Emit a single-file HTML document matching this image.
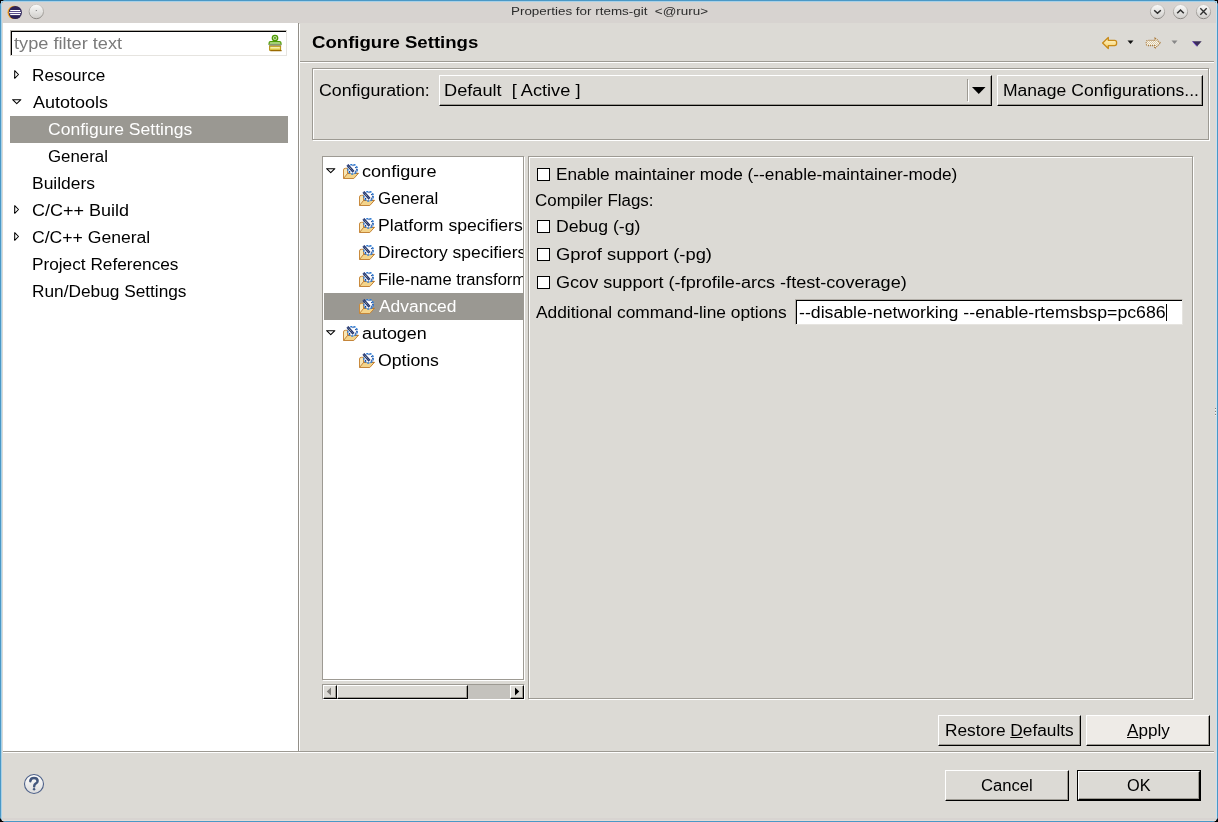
<!DOCTYPE html>
<html><head><meta charset="utf-8">
<style>
*{margin:0;padding:0;box-sizing:border-box}
html{background:#000}html,body{width:1218px;height:822px;overflow:hidden}body{background:#000}
body{position:relative;font-family:"Liberation Sans",sans-serif;font-size:16px;letter-spacing:0.6px;color:#000}
.a{position:absolute}
.t{position:absolute;line-height:20px;white-space:nowrap;will-change:transform}
.sel{position:absolute;background:#9a9892}
.cb{position:absolute;width:13px;height:13px;border:1px solid #000;background:#fff}
.btn{position:absolute;background:#dcdad5;border-top:1px solid #fff;border-left:1px solid #fff;border-right:1px solid #000;border-bottom:1px solid #000;box-shadow:inset -1px -1px 0 #9d9a93}
.etch{position:absolute;border:1px solid #9d9a93;box-shadow:1px 1px 0 #fff, inset 1px 1px 0 #fff}
</style></head><body>
<svg width="0" height="0" style="position:absolute">
<defs>
<linearGradient id="rb" x1="0" y1="0" x2="0" y2="1"><stop offset="0" stop-color="#fbfbfa"/><stop offset="1" stop-color="#cfcdca"/></linearGradient>
<linearGradient id="rs" x1="0" y1="0" x2="0" y2="1"><stop offset="0" stop-color="#cfccc8"/><stop offset="1" stop-color="#8a8783"/></linearGradient>
<linearGradient id="hb" x1="0" y1="0" x2="0" y2="1"><stop offset="0" stop-color="#ffffff"/><stop offset="1" stop-color="#dcdcdc"/></linearGradient>
<linearGradient id="ya" x1="0" y1="0" x2="0" y2="1"><stop offset="0" stop-color="#fff8d8"/><stop offset="1" stop-color="#f6cf63"/></linearGradient>
<pattern id="dith" width="2" height="2" patternUnits="userSpaceOnUse"><rect width="2" height="2" fill="#fbf6ea"/><rect width="1" height="1" fill="#d9c9a8"/><rect x="1" y="1" width="1" height="1" fill="#d9c9a8"/></pattern>
<g id="fg">
 <path d="M0.5 14.2 L0.5 6 Q0.5 4.3 2.3 4.3 L4.5 4.3 L4.5 14.2 Z" fill="#f8e6b4" stroke="#c98b3e" stroke-width="1"/>
 <path d="M4.6 9.4 L15.4 9.4 L10.8 14.5 L0.5 14.5 Z" fill="#f4d48a" stroke="#c4853a" stroke-width="1"/>
 <path d="M4.6 9.4 L15.4 9.4" stroke="#b8782e" stroke-width="1.1"/>
 <circle cx="9.6" cy="5.2" r="4.7" fill="#ffffff" stroke="#2f7bd2" stroke-width="1.5" stroke-dasharray="2.2 1"/>
 <circle cx="12.6" cy="3.6" r="0.7" fill="#1c3f8a"/><circle cx="6.6" cy="7.4" r="0.7" fill="#1c3f8a"/><circle cx="12.8" cy="7.2" r="0.7" fill="#1c3f8a"/><circle cx="10" cy="1.6" r="0.7" fill="#1c3f8a"/><circle cx="13.8" cy="5.4" r="0.6" fill="#1c3f8a"/>
 <path d="M4.4 0.9 L10.6 7.9" stroke="#1b2f72" stroke-width="2.6"/>
 <path d="M5 1.7 L10.1 7.3" stroke="#f4eaa0" stroke-width="0.9" stroke-dasharray="0.9 0.9"/>
</g>
</defs></svg>
<div class="a" style="left:0;top:0;width:1218px;height:822px;background:#dcdad5;border-radius:6px"></div>
<div class="a" style="left:2px;top:2px;width:1214px;height:21px;background:#d7d3d0"></div>
<div class="t" style="left:510.98px;top:1px;letter-spacing:0;transform:scaleX(1.2194);transform-origin:0 0;font-size:11px;color:#2b2b2b">Properties for rtems-git&nbsp; &lt;@ruru&gt;</div>
<svg class="a" style="left:0px;top:0px" width="50" height="24" viewBox="0 0 50 24">
<circle cx="14.2" cy="12.4" r="6.7" fill="#f5a21b"/>
<circle cx="15.3" cy="12.5" r="6.6" fill="#2b2257"/>
<rect x="10.2" y="10" width="10" height="1.1" fill="#fff"/><rect x="9.2" y="12" width="11.8" height="1.1" fill="#fff"/><rect x="10.2" y="14" width="10" height="1.1" fill="#fff"/>
<rect x="9.5" y="11.1" width="11" height="0.9" fill="#5d518f"/><rect x="9.5" y="13.1" width="11" height="0.9" fill="#5d518f"/>
</svg>
<svg class="a" style="left:28px;top:3px" width="17" height="17" viewBox="0 0 17 17">
<circle cx="8.3" cy="8.5" r="7.2" fill="url(#rb)" stroke="url(#rs)" stroke-width="1"/>
<rect x="7.8" y="7.3" width="1" height="1" fill="#444"/><rect x="7.8" y="8.3" width="1" height="1" fill="#fff"/>
</svg>
<svg class="a" style="left:1148.9px;top:3px" width="17" height="17" viewBox="0 0 17 17">
<circle cx="8.5" cy="8.6" r="7.1" fill="url(#rb)" stroke="url(#rs)" stroke-width="1"/>
<path d="M5.2 7.3 L8.5 10.3 L11.8 7.3" fill="none" stroke="#2e2e2e" stroke-width="1.55"/>
</svg>
<svg class="a" style="left:1172.1px;top:3px" width="17" height="17" viewBox="0 0 17 17">
<circle cx="8.5" cy="8.6" r="7.1" fill="url(#rb)" stroke="url(#rs)" stroke-width="1"/>
<path d="M5.2 10.3 L8.5 7.0 L11.8 10.3" fill="none" stroke="#2e2e2e" stroke-width="1.55"/>
</svg>
<svg class="a" style="left:1195.0px;top:3px" width="17" height="17" viewBox="0 0 17 17">
<circle cx="8.5" cy="8.6" r="7.1" fill="url(#rb)" stroke="url(#rs)" stroke-width="1"/>
<path d="M5.3 5.3 L11.7 11.7 M11.7 5.3 L5.3 11.7" fill="none" stroke="#2e2e2e" stroke-width="1.35"/>
</svg>
<div class="a" style="left:3px;top:23px;width:295px;height:728px;background:#fff"></div>
<div class="a" style="left:298px;top:23px;width:1px;height:728px;background:#928f88"></div>
<div class="a" style="left:299px;top:24px;width:1px;height:727px;background:#fff"></div>
<div class="a" style="left:10px;top:30px;width:277px;height:26px;border-top:1px solid #b3afa8;border-left:1px solid #b3afa8;border-right:1px solid #e6e4e0;border-bottom:1px solid #e6e4e0"></div>
<div class="a" style="left:11px;top:31px;width:275px;height:24px;border-top:1px solid #000;border-left:1px solid #000"></div>
<div class="t" style="left:13.60px;top:34px;letter-spacing:0;transform:scaleX(1.1358);transform-origin:0 0;color:#7a7a7a">type filter text</div>
<svg class="a" style="left:264px;top:32px" width="24" height="24" viewBox="0 0 24 24">
<rect x="9.3" y="8" width="3.4" height="2.5" fill="#b6dc80"/>
<circle cx="11" cy="6" r="2.7" fill="#c9e6a0" stroke="#4e9a06" stroke-width="1.3"/>
<circle cx="11" cy="6" r="0.9" fill="#3f8f10"/>
<path d="M6.5 9.6 L15.5 9.6 Q17 9.6 17 11 L17 12.3 L5.1 12.3 L5.1 11 Q5.1 9.6 6.5 9.6 Z" fill="#c2e39a" stroke="#4e9a06" stroke-width="1.2"/>
<rect x="5" y="12.3" width="12.2" height="1.9" fill="#9e9e9a"/>
<rect x="5.6" y="14.2" width="11" height="4" fill="#ecdc66" stroke="#b5900f" stroke-width="1"/>
<rect x="6.6" y="15" width="9" height="1.2" fill="#f4eeb0"/>
<path d="M6.3 18.6 L17.6 18.6" stroke="#9a6a00" stroke-width="1.3"/>
</svg>
<div class="sel" style="left:10px;top:116px;width:278px;height:27px"></div>
<div class="t" style="left:31.83px;top:66px;letter-spacing:0;transform:scaleX(1.0716);transform-origin:0 0;">Resource</div>
<div class="t" style="left:32.70px;top:93px;letter-spacing:0;transform:scaleX(1.1227);transform-origin:0 0;">Autotools</div>
<div class="t" style="left:47.90px;top:120px;letter-spacing:0;transform:scaleX(1.0954);transform-origin:0 0;color:#fff">Configure Settings</div>
<div class="t" style="left:47.95px;top:147px;letter-spacing:0;transform:scaleX(1.0527);transform-origin:0 0;">General</div>
<div class="t" style="left:32.11px;top:174px;letter-spacing:0;transform:scaleX(1.0911);transform-origin:0 0;">Builders</div>
<div class="t" style="left:32.08px;top:201px;letter-spacing:0;transform:scaleX(1.1238);transform-origin:0 0;">C/C++ Build</div>
<div class="t" style="left:32.10px;top:228px;letter-spacing:0;transform:scaleX(1.0991);transform-origin:0 0;">C/C++ General</div>
<div class="t" style="left:32.12px;top:255px;letter-spacing:0;transform:scaleX(1.0763);transform-origin:0 0;">Project References</div>
<div class="t" style="left:32.12px;top:282px;letter-spacing:0;transform:scaleX(1.0789);transform-origin:0 0;">Run/Debug Settings</div>
<svg class="a" style="left:13px;top:69px" width="8" height="11" viewBox="0 0 8 11"><path d="M1.7 1.7 L1.7 9.3 L5.5 5.5 Z" fill="#fff" stroke="#000" stroke-width="1.05" stroke-linejoin="round"/></svg>
<svg class="a" style="left:11px;top:98px" width="12" height="8" viewBox="0 0 12 8"><path d="M1.6 1.7 L9.9 1.7 L5.75 5.6 Z" fill="#fff" stroke="#000" stroke-width="1.05" stroke-linejoin="round"/></svg>
<svg class="a" style="left:13px;top:204px" width="8" height="11" viewBox="0 0 8 11"><path d="M1.7 1.7 L1.7 9.3 L5.5 5.5 Z" fill="#fff" stroke="#000" stroke-width="1.05" stroke-linejoin="round"/></svg>
<svg class="a" style="left:13px;top:231px" width="8" height="11" viewBox="0 0 8 11"><path d="M1.7 1.7 L1.7 9.3 L5.5 5.5 Z" fill="#fff" stroke="#000" stroke-width="1.05" stroke-linejoin="round"/></svg>
<div class="t" style="left:311.84px;top:33px;letter-spacing:0;transform:scaleX(1.162);transform-origin:0 0;font-weight:bold">Configure Settings</div>
<div class="a" style="left:300px;top:61px;width:914px;height:1px;background:#9d9a93"></div>
<div class="a" style="left:300px;top:62px;width:914px;height:1px;background:#fff"></div>
<svg class="a" style="left:1101px;top:36px" width="18" height="14" viewBox="0 0 18 14">
<path d="M1.6 7 L7.3 1.5 L7.3 4.4 L13.6 4.4 Q15.6 4.4 15.6 6.4 L15.6 7.6 Q15.6 9.6 13.6 9.6 L7.3 9.6 L7.3 12.5 Z" fill="url(#ya)" stroke="#c88a18" stroke-width="1.3" stroke-linejoin="round"/>
</svg>
<svg class="a" style="left:1127px;top:40px" width="7" height="5" viewBox="0 0 7 5"><path d="M0.5 0.5 L6.5 0.5 L3.5 4 Z" fill="#111"/></svg>
<svg class="a" style="left:1144px;top:36px" width="18" height="14" viewBox="0 0 18 14">
<path d="M16.4 7 L10.7 1.5 L10.7 4.4 L4.2 4.4 Q2.2 4.4 2.2 6.4 L2.2 7.6 Q2.2 9.6 4.2 9.6 L10.7 9.6 L10.7 12.5 Z" fill="url(#dith)" stroke="#a8783a" stroke-width="1.2" stroke-dasharray="1 1" stroke-linejoin="round"/>
</svg>
<svg class="a" style="left:1171px;top:40px" width="7" height="5" viewBox="0 0 7 5"><path d="M0.5 0.5 L6.5 0.5 L3.5 4 Z" fill="#888"/></svg>
<svg class="a" style="left:1192px;top:41px" width="10" height="6" viewBox="0 0 10 6"><path d="M0.3 0.3 L9.7 0.3 L5 5.5 Z" fill="#3b2e5a"/><path d="M0.5 0.5 L5 5.3" stroke="#6a3ad0" stroke-width="0.9"/></svg>
<div class="etch" style="left:312px;top:68px;width:897px;height:72px"></div>
<div class="t" style="left:319.09px;top:81px;letter-spacing:0;transform:scaleX(1.1113);transform-origin:0 0;">Configuration:</div>
<div class="btn" style="left:439px;top:75px;width:553px;height:31px"></div>
<div class="t" style="left:443.96px;top:81px;letter-spacing:0;transform:scaleX(1.1364);transform-origin:0 0;">Default&nbsp; [ Active ]</div>
<div class="a" style="left:967px;top:79px;width:1px;height:22px;background:#9d9a93"></div>
<div class="a" style="left:968px;top:80px;width:1px;height:22px;background:#fff"></div>
<svg class="a" style="left:971px;top:86px" width="16" height="9" viewBox="0 0 16 9"><path d="M1 1 L14.5 1 L7.75 8 Z" fill="#000"/></svg>
<div class="btn" style="left:997px;top:75px;width:206px;height:31px"></div>
<div class="t" style="left:1003.20px;top:81px;letter-spacing:0;transform:scaleX(1.096);transform-origin:0 0;">Manage Configurations...</div>
<div class="etch" style="left:322px;top:156px;width:202px;height:524px;background:#fff"></div>
<div class="a" style="left:323px;top:157px;width:200px;height:522px;overflow:hidden">
<div class="sel" style="left:1px;top:136px;width:199px;height:27px"></div>
<div class="t" style="left:38.97px;top:5px;letter-spacing:0;transform:scaleX(1.1312);transform-origin:0 0;">configure</div>
<svg class="a" width="16" height="16" viewBox="0 0 16 16" style="left:20px;top:7px"><use href="#fg"/></svg>
<svg class="a" style="left:2px;top:10px" width="12" height="8" viewBox="0 0 12 8"><path d="M1.6 1.7 L9.9 1.7 L5.75 5.6 Z" fill="#fff" stroke="#000" stroke-width="1.05" stroke-linejoin="round"/></svg>
<div class="t" style="left:54.94px;top:32px;letter-spacing:0;transform:scaleX(1.0582);transform-origin:0 0;">General</div>
<svg class="a" width="16" height="16" viewBox="0 0 16 16" style="left:36px;top:34px"><use href="#fg"/></svg>
<div class="t" style="left:55.40px;top:59px;letter-spacing:0;transform:scaleX(1.1);transform-origin:0 0;">Platform specifiers</div>
<svg class="a" width="16" height="16" viewBox="0 0 16 16" style="left:36px;top:61px"><use href="#fg"/></svg>
<div class="t" style="left:55.40px;top:86px;letter-spacing:0;transform:scaleX(1.09);transform-origin:0 0;">Directory specifiers</div>
<svg class="a" width="16" height="16" viewBox="0 0 16 16" style="left:36px;top:88px"><use href="#fg"/></svg>
<div class="t" style="left:55.40px;top:113px;letter-spacing:0;transform:scaleX(1.035);transform-origin:0 0;">File-name transforms</div>
<svg class="a" width="16" height="16" viewBox="0 0 16 16" style="left:36px;top:115px"><use href="#fg"/></svg>
<div class="t" style="left:56.00px;top:140px;letter-spacing:0;transform:scaleX(1.0886);transform-origin:0 0;color:#fff">Advanced</div>
<svg class="a" width="16" height="16" viewBox="0 0 16 16" style="left:36px;top:142px"><use href="#fg"/></svg>
<div class="t" style="left:38.98px;top:167px;letter-spacing:0;transform:scaleX(1.1196);transform-origin:0 0;">autogen</div>
<svg class="a" width="16" height="16" viewBox="0 0 16 16" style="left:20px;top:169px"><use href="#fg"/></svg>
<svg class="a" style="left:2px;top:172px" width="12" height="8" viewBox="0 0 12 8"><path d="M1.6 1.7 L9.9 1.7 L5.75 5.6 Z" fill="#fff" stroke="#000" stroke-width="1.05" stroke-linejoin="round"/></svg>
<div class="t" style="left:54.90px;top:194px;letter-spacing:0;transform:scaleX(1.1037);transform-origin:0 0;">Options</div>
<svg class="a" width="16" height="16" viewBox="0 0 16 16" style="left:36px;top:196px"><use href="#fg"/></svg>
</div>
<div class="a" style="left:322px;top:684px;width:203px;height:16px;background:#c4c2bd;border-left:1px solid #9d9a93;border-top:1px solid #9d9a93;border-right:1px solid #fff;border-bottom:1px solid #fff"></div>
<div class="btn" style="left:323px;top:685px;width:14px;height:14px"></div>
<svg class="a" style="left:326px;top:687px" width="6" height="9" viewBox="0 0 6 9"><path d="M5 0.5 L5 8.5 L0.8 4.5 Z" fill="#7e7c78"/></svg>
<div class="btn" style="left:337px;top:685px;width:131px;height:14px"></div>
<div class="btn" style="left:510px;top:685px;width:14px;height:14px"></div>
<svg class="a" style="left:514px;top:687px" width="6" height="9" viewBox="0 0 6 9"><path d="M1 0.5 L1 8.5 L5.2 4.5 Z" fill="#000"/></svg>
<div class="etch" style="left:528px;top:156px;width:665px;height:543px"></div>
<div class="cb" style="left:537px;top:168px"></div>
<div class="t" style="left:556.12px;top:165px;letter-spacing:0;transform:scaleX(1.0771);transform-origin:0 0;">Enable maintainer mode (--enable-maintainer-mode)</div>
<div class="t" style="left:535.34px;top:191px;letter-spacing:0;transform:scaleX(1.0573);transform-origin:0 0;">Compiler Flags:</div>
<div class="cb" style="left:537px;top:220px"></div>
<div class="t" style="left:556.10px;top:217px;letter-spacing:0;transform:scaleX(1.1027);transform-origin:0 0;">Debug (-g)</div>
<div class="cb" style="left:537px;top:248px"></div>
<div class="t" style="left:556.05px;top:245px;letter-spacing:0;transform:scaleX(1.1463);transform-origin:0 0;">Gprof support (-pg)</div>
<div class="cb" style="left:537px;top:276px"></div>
<div class="t" style="left:556.07px;top:273px;letter-spacing:0;transform:scaleX(1.1302);transform-origin:0 0;">Gcov support (-fprofile-arcs -ftest-coverage)</div>
<div class="t" style="left:536.40px;top:303px;letter-spacing:0;transform:scaleX(1.084);transform-origin:0 0;">Additional command-line options</div>
<div class="a" style="left:795px;top:299px;width:388px;height:26px;background:#fff;border-top:1px solid #b3afa8;border-left:1px solid #b3afa8;border-right:1px solid #e6e4e0;border-bottom:1px solid #e6e4e0"></div>
<div class="a" style="left:796px;top:300px;width:386px;height:24px;border-top:1px solid #000;border-left:1px solid #000"></div>
<div class="t" style="left:799.19px;top:303px;letter-spacing:0;transform:scaleX(1.1067);transform-origin:0 0;">--disable-networking --enable-rtemsbsp=pc686</div>
<div class="a" style="left:1166px;top:304px;width:1px;height:17px;background:#000"></div>
<div class="btn" style="left:938px;top:715px;width:143px;height:31px"></div>
<div class="t" style="left:945.22px;top:721px;letter-spacing:0;transform:scaleX(1.0797);transform-origin:0 0;">Restore <u>D</u>efaults</div>
<div class="btn" style="left:1086px;top:715px;width:124px;height:31px;background:#eeebe7"></div>
<div class="t" style="left:1126.50px;top:721px;letter-spacing:0;transform:scaleX(1.0675);transform-origin:0 0;"><u>A</u>pply</div>
<div class="a" style="left:3px;top:751px;width:1211px;height:1px;background:#9d9a93"></div>
<div class="a" style="left:3px;top:752px;width:1211px;height:1px;background:#fff"></div>
<div class="btn" style="left:945px;top:770px;width:124px;height:31px"></div>
<div class="t" style="left:981.16px;top:776px;letter-spacing:0;transform:scaleX(1.0396);transform-origin:0 0;">Cancel</div>
<div class="a" style="left:1077px;top:770px;width:124px;height:31px;border:1px solid #000"></div>
<div class="btn" style="left:1078px;top:771px;width:122px;height:29px"></div>
<div class="t" style="left:1127.08px;top:776px;letter-spacing:0;transform:scaleX(1.0182);transform-origin:0 0;">OK</div>
<svg class="a" style="left:23px;top:773px" width="22" height="22" viewBox="0 0 22 22">
<circle cx="11" cy="11" r="9.5" fill="url(#hb)" stroke="#4e6189" stroke-width="1.1"/>
<path d="M7.3 8.2 Q7.5 4.9 11 4.9 Q14.6 4.9 14.6 7.9 Q14.6 9.7 12.6 10.7 Q11.3 11.4 11.2 13.2" fill="none" stroke="#43577d" stroke-width="2.5" stroke-linecap="round"/>
<path d="M11.1 14.6 L12.7 16.2 L11.1 17.8 L9.5 16.2 Z" fill="#43577d"/>
</svg>
<div class="a" style="left:0;top:0;width:1218px;height:822px;border:1px solid #4a98c6;border-radius:6px"></div>
<div class="a" style="left:1px;top:1px;width:1216px;height:1px;background:#a8d1e8"></div>
<div class="a" style="left:1px;top:1px;width:1px;height:818px;background:#a8d1e8"></div>
<div class="a" style="left:1216px;top:2px;width:1px;height:817px;background:#c9e0ee"></div>
<div class="a" style="left:2px;top:818px;width:1214px;height:2px;background:#d8d4d1"></div>
<div class="a" style="left:2px;top:820px;width:1214px;height:1px;background:#e4dcd8"></div>
<div class="a" style="left:1215px;top:23px;width:1px;height:795px;background:#dedad6"></div>
<div class="a" style="left:1215px;top:408px;width:1px;height:8px;background:repeating-linear-gradient(#84817c 0 1px, #f4f2f0 1px 2px, transparent 2px 3px)"></div>
</body></html>
